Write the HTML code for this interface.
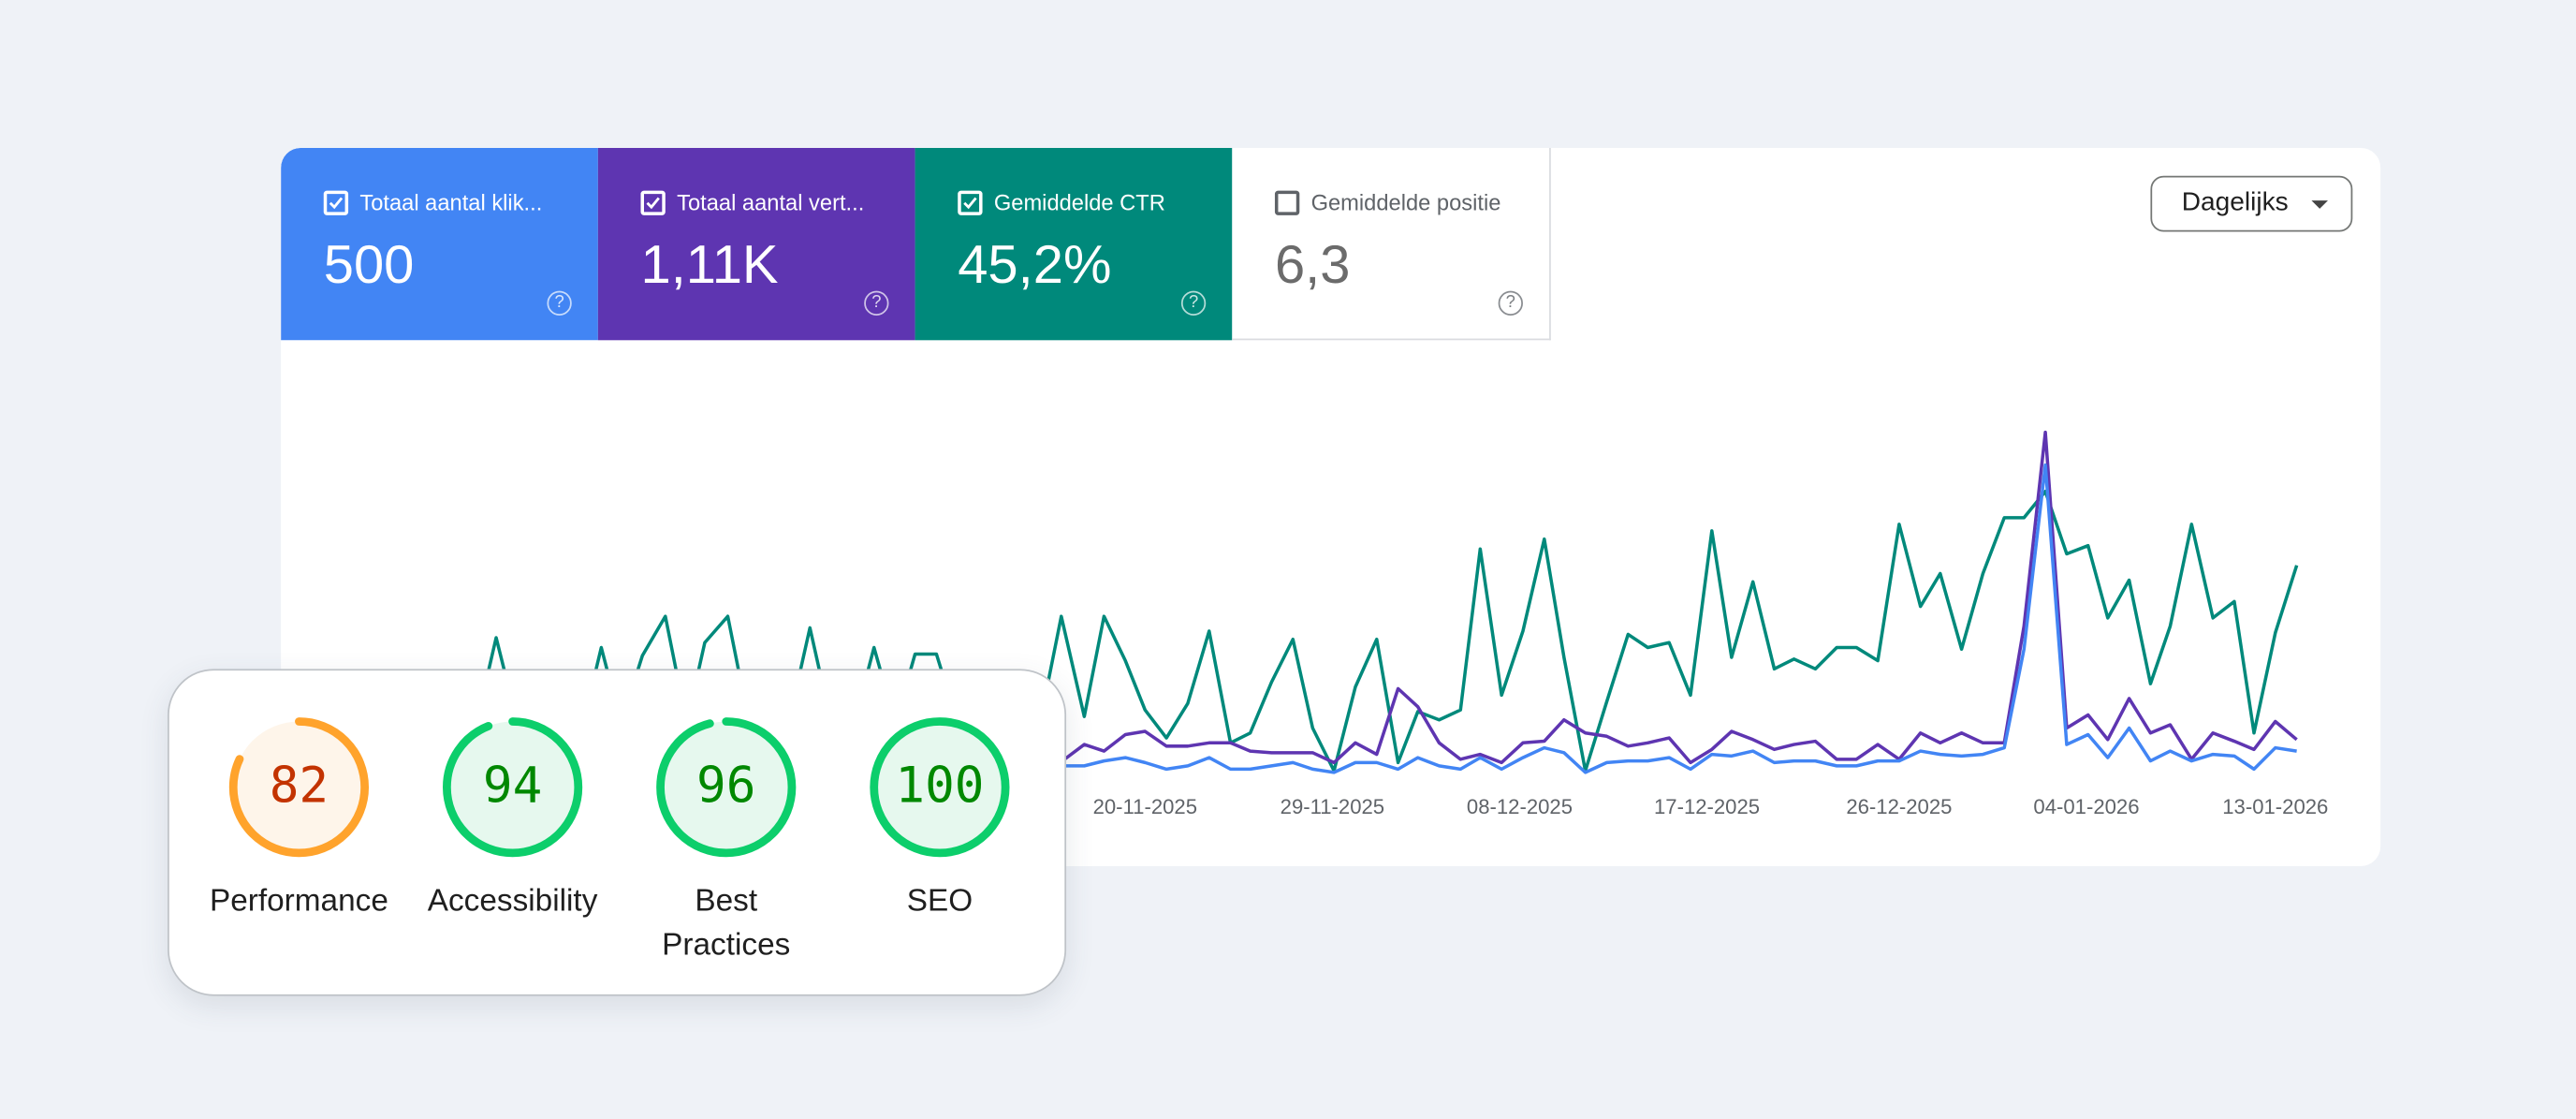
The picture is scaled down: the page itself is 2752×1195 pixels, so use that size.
<!DOCTYPE html>
<html><head><meta charset="utf-8">
<style>
html,body{margin:0;padding:0;background:#eff2f7;}
body{width:2752px;height:1195px;overflow:hidden;position:relative;font-family:"Liberation Sans",Arial,sans-serif;}
#w{position:absolute;left:0;top:0;width:1568px;height:681px;transform:scale(1.75510);transform-origin:0 0;}
.card{position:absolute;left:171px;top:90px;width:1278px;height:437px;background:#fff;border-radius:12px;overflow:hidden;}
.tile{position:absolute;top:0;width:193px;height:117px;color:#fff;}
.tile .lab{position:absolute;left:26px;top:26px;font-size:13.5px;white-space:nowrap;display:flex;align-items:center;}
.cb{width:11px;height:11px;border:2px solid #fff;border-radius:2px;margin-right:7px;position:relative;box-sizing:content-box;}
.cb svg{position:absolute;left:0;top:0;}
.tile .val{position:absolute;left:26px;top:52px;font-size:33px;}
.q{position:absolute;left:162px;top:87px;width:13px;height:13px;border:1.5px solid rgba(255,255,255,.7);border-radius:50%;font-size:10.5px;line-height:13px;text-align:center;color:rgba(255,255,255,.8);}
.dd{position:absolute;left:1138px;top:17px;width:121px;height:32px;border:1px solid #747775;border-radius:8px;}
.dd span{position:absolute;left:18px;top:7px;font-size:16px;color:#1f1f1f;}
.dd i{position:absolute;left:97px;top:14px;width:0;height:0;border-left:5px solid transparent;border-right:5px solid transparent;border-top:5px solid #444;}
.ax{position:absolute;top:484px;font-size:12.6px;color:#5f6368;width:80px;text-align:center;margin-left:-40px;}
.ov{position:absolute;left:102px;top:407px;width:545px;height:197px;background:#fff;border:1px solid #bfc3c8;border-radius:28px;box-shadow:0 6px 18px rgba(60,70,90,.12);}
.g{position:absolute;top:25px;width:92px;height:92px;}
.g svg{position:absolute;left:0;top:0;}
.g b{position:absolute;left:0;top:0;width:92px;line-height:92px;text-align:center;font-family:"DejaVu Sans Mono","Liberation Mono",monospace;font-weight:normal;font-size:30px;}
.gl{position:absolute;top:127px;width:130px;text-align:center;font-size:19px;line-height:27px;color:#1f1f1f;}
</style></head><body><div id="w">
<div class="card">
 <div class="tile" style="left:0;background:#4285f4;border-top-left-radius:12px">
  <div class="lab"><div class="cb"><svg width="11" height="11" viewBox="0 0 11 11"><path d="M2 5.5 L4.5 8 L9 2.5" stroke="#fff" stroke-width="1.6" fill="none"/></svg></div>Totaal aantal klik...</div>
  <div class="val">500</div><div class="q">?</div></div>
 <div class="tile" style="left:193px;background:#5e35b1">
  <div class="lab"><div class="cb"><svg width="11" height="11" viewBox="0 0 11 11"><path d="M2 5.5 L4.5 8 L9 2.5" stroke="#fff" stroke-width="1.6" fill="none"/></svg></div>Totaal aantal vert...</div>
  <div class="val">1,11K</div><div class="q">?</div></div>
 <div class="tile" style="left:386px;background:#00897b">
  <div class="lab"><div class="cb"><svg width="11" height="11" viewBox="0 0 11 11"><path d="M2 5.5 L4.5 8 L9 2.5" stroke="#fff" stroke-width="1.6" fill="none"/></svg></div>Gemiddelde CTR</div>
  <div class="val">45,2%</div><div class="q">?</div></div>
 <div class="tile" style="left:579px;background:#fff;color:#5f6368;border-right:1px solid #dadce0;border-bottom:1px solid #dadce0;height:116px;">
  <div class="lab"><div class="cb" style="border-color:#5f6368"></div>Gemiddelde positie</div>
  <div class="val" style="color:#6b6b6b">6,3</div><div class="q" style="border-color:#8a8d91;color:#7a7d81">?</div></div>
 <div class="dd"><span>Dagelijks</span><i></i></div>
</div>
<svg style="position:absolute;left:0;top:0" width="1568" height="681" viewBox="0 0 1568 681" fill="none" stroke-width="2" stroke-linejoin="round">
<polyline stroke="#00897b" points="190,440 290,440 302,388 315,440 355,440 366,394 378,440 391,399 405,375 418,440 429,391 443,375 456,440 480,440 493,382 506,440 520,440 532,394 545,440 557,398 570,398 583,440 633,440 646,375 660,436 672,375 685,402 697,432 710,449 723,428 736,384 749,452 761,446 774,415 787,389 799,443 812,469 825,418 838,389 851,464 863,433 876,438 889,432 901,334 914,423 927,384 940,328 952,400 965,469 978,427 991,386 1003,394 1016,391 1029,423 1042,323 1054,400 1067,354 1080,407 1092,401 1105,407 1118,394 1130,394 1143,402 1156,319 1169,369 1181,349 1194,395 1207,349 1220,315 1232,315 1245,299 1258,337 1271,332 1283,376 1296,353 1309,416 1321,381 1334,319 1347,376 1360,366 1372,446 1385,385 1398,344"/>
<polyline stroke="#5e35b1" points="620,462 648,462 660,453 672,457 685,447 697,445 710,454 723,454 736,452 749,452 761,457 774,458 787,458 799,458 812,464 825,452 838,459 851,419 863,430 876,452 889,462 901,459 914,464 927,452 940,451 952,438 965,446 978,448 991,454 1003,452 1016,449 1029,464 1042,456 1054,445 1067,450 1080,456 1092,453 1105,451 1118,462 1130,462 1143,453 1156,462 1169,446 1181,452 1194,446 1207,452 1220,452 1232,381 1245,263 1258,443 1271,435 1283,450 1296,425 1309,446 1321,441 1334,462 1347,446 1360,451 1372,456 1385,439 1398,450"/>
<polyline stroke="#4285f4" points="620,466 660,466 672,463 685,461 697,464 710,468 723,466 736,461 749,468 761,468 774,466 787,464 799,468 812,470 825,464 838,464 851,468 863,461 876,466 889,468 901,461 914,468 927,461 940,455 952,458 965,470 978,464 991,463 1003,463 1016,461 1029,468 1042,459 1054,460 1067,457 1080,464 1092,463 1105,463 1118,466 1130,466 1143,463 1156,463 1169,457 1181,459 1194,460 1207,459 1220,455 1232,395 1245,283 1258,453 1271,447 1283,461 1296,443 1309,463 1321,457 1334,463 1347,459 1360,460 1372,468 1385,455 1398,457"/>
</svg>
<div class="ax" style="left:697px">20-11-2025</div>
<div class="ax" style="left:811px">29-11-2025</div>
<div class="ax" style="left:925px">08-12-2025</div>
<div class="ax" style="left:1039px">17-12-2025</div>
<div class="ax" style="left:1156px">26-12-2025</div>
<div class="ax" style="left:1270px">04-01-2026</div>
<div class="ax" style="left:1385px">13-01-2026</div>
<div class="ov">
 <div class="g" style="left:33px"><svg width="92" height="92" viewBox="0 0 92 92"><circle cx="46" cy="46" r="40" fill="#fef5ea"/><circle cx="46" cy="46" r="40" fill="none" stroke="#ffa32c" stroke-width="5" stroke-linecap="round" stroke-dasharray="206.1 251.3" transform="rotate(-90 46 46)"/></svg><b style="color:#c33300">82</b></div>
 <div class="g" style="left:163px"><svg width="92" height="92" viewBox="0 0 92 92"><circle cx="46" cy="46" r="40" fill="#e6f8ee"/><circle cx="46" cy="46" r="40" fill="none" stroke="#0cce6b" stroke-width="5" stroke-linecap="round" stroke-dasharray="236.2 251.3" transform="rotate(-90 46 46)"/></svg><b style="color:#008800">94</b></div>
 <div class="g" style="left:293px"><svg width="92" height="92" viewBox="0 0 92 92"><circle cx="46" cy="46" r="40" fill="#e6f8ee"/><circle cx="46" cy="46" r="40" fill="none" stroke="#0cce6b" stroke-width="5" stroke-linecap="round" stroke-dasharray="241.2 251.3" transform="rotate(-90 46 46)"/></svg><b style="color:#008800">96</b></div>
 <div class="g" style="left:423px"><svg width="92" height="92" viewBox="0 0 92 92"><circle cx="46" cy="46" r="40" fill="#e6f8ee" stroke="#0cce6b" stroke-width="5"/></svg><b style="color:#008800">100</b></div>
 <div class="gl" style="left:14px">Performance</div>
 <div class="gl" style="left:144px">Accessibility</div>
 <div class="gl" style="left:274px">Best<br>Practices</div>
 <div class="gl" style="left:404px">SEO</div>
</div>
</div></body></html>
